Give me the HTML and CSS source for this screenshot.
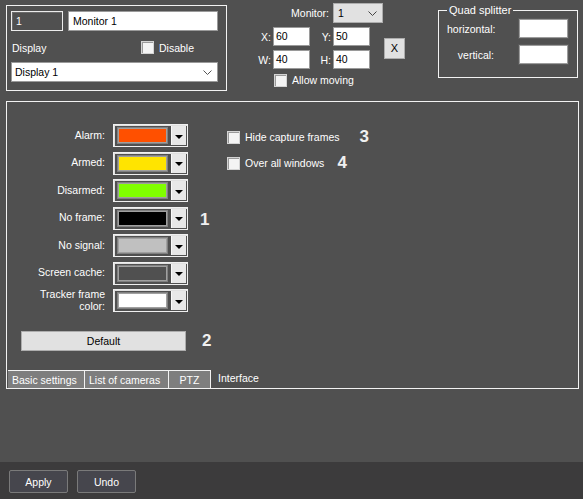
FILE: index.html
```html
<!DOCTYPE html>
<html>
<head>
<meta charset="utf-8">
<link rel="stylesheet" href="styles.css">
</head>
<body>
<div class="app">
  <div class="top">
    <div class="mon-box">
      <div class="mon-row1">
        <div class="in-id">1</div>
        <div class="in-name">Monitor 1</div>
      </div>
      <div class="mon-row2">
        <span class="lbl">Display</span>
        <label class="chk"><span class="cb"></span><span>Disable</span></label>
      </div>
      <div class="sel-display">
        <span>Display 1</span>
        <svg class="chev" width="9" height="5" viewBox="0 0 9 5"><path d="M0.5 0.5 L4.5 4.5 L8.5 0.5" fill="none" stroke="#555" stroke-width="1"/></svg>
      </div>
    </div>

    <div class="geo">
      <div class="geo-mon-lbl">Monitor:</div>
      <div class="sel-mon">
        <span>1</span>
        <svg class="chev" width="9" height="5" viewBox="0 0 9 5"><path d="M0.5 0.5 L4.5 4.5 L8.5 0.5" fill="none" stroke="#444" stroke-width="1"/></svg>
      </div>
      <div class="geo-lbl g1 r2">X:</div>
      <div class="num g2 r2">60</div>
      <div class="geo-lbl g3 r2">Y:</div>
      <div class="num g4 r2">50</div>
      <div class="geo-x">X</div>
      <div class="geo-lbl g1 r3">W:</div>
      <div class="num g2 r3">40</div>
      <div class="geo-lbl g3 r3">H:</div>
      <div class="num g4 r3">40</div>
      <label class="chk geo-allow"><span class="cb"></span><span>Allow moving</span></label>
    </div>

    <fieldset class="quad">
      <legend>Quad splitter</legend>
      <div class="quad-grid">
        <span class="quad-lbl">horizontal:</span>
        <div class="quad-in"></div>
        <span class="quad-lbl">vertical:</span>
        <div class="quad-in"></div>
      </div>
    </fieldset>
  </div>

  <div class="main">
    <div class="main-body">
      <div class="colors">
        <div class="crow">
          <span class="clbl">Alarm:</span>
          <div class="combo"><span class="swatch c-alarm"></span><span class="ddb"><span class="tri"></span></span></div>
          <span></span>
        </div>
        <div class="crow">
          <span class="clbl">Armed:</span>
          <div class="combo"><span class="swatch c-armed"></span><span class="ddb"><span class="tri"></span></span></div>
          <span></span>
        </div>
        <div class="crow">
          <span class="clbl">Disarmed:</span>
          <div class="combo"><span class="swatch c-disarmed"></span><span class="ddb"><span class="tri"></span></span></div>
          <span></span>
        </div>
        <div class="crow">
          <span class="clbl">No frame:</span>
          <div class="combo"><span class="swatch c-noframe"></span><span class="ddb"><span class="tri"></span></span></div>
          <span class="note note-1">1</span>
        </div>
        <div class="crow">
          <span class="clbl">No signal:</span>
          <div class="combo"><span class="swatch c-nosignal"></span><span class="ddb"><span class="tri"></span></span></div>
          <span></span>
        </div>
        <div class="crow">
          <span class="clbl">Screen cache:</span>
          <div class="combo"><span class="swatch c-cache"></span><span class="ddb"><span class="tri"></span></span></div>
          <span></span>
        </div>
        <div class="crow">
          <span class="clbl two">Tracker frame<br>color:</span>
          <div class="combo"><span class="swatch c-tracker"></span><span class="ddb"><span class="tri"></span></span></div>
          <span></span>
        </div>
        <div class="def-row">
          <div class="btn-default">Default</div>
          <span class="note note-2">2</span>
        </div>
      </div>
      <div class="opts">
        <div class="opt-row">
          <label class="chk"><span class="cb"></span><span>Hide capture frames</span></label>
          <span class="note note-3">3</span>
        </div>
        <div class="opt-row">
          <label class="chk"><span class="cb"></span><span>Over all windows</span></label>
          <span class="note note-4">4</span>
        </div>
      </div>
    </div>
    <div class="tabs">
      <div class="tab">Basic settings</div>
      <div class="tab">List of cameras</div>
      <div class="tab tab-ptz">PTZ</div>
      <div class="tab-active">Interface</div>
    </div>
  </div>

  <div class="footer">
    <div class="fbtn">Apply</div>
    <div class="fbtn">Undo</div>
  </div>
</div>
</body>
</html>
```

FILE: styles.css
```css
* { box-sizing: border-box; }
html, body { margin: 0; padding: 0; }
body {
  background: #505050;
  font-family: "Liberation Sans", Arial, sans-serif;
  font-size: 10.5px;
  color: #ffffff;
  width: 583px;
  height: 499px;
  overflow: hidden;
}
.app {
  display: flex;
  flex-direction: column;
  height: 499px;
}

/* ---------- top ---------- */
.top {
  display: flex;
  align-items: flex-start;
  height: 101px;
}
.mon-box {
  margin: 5px 0 0 6px;
  width: 221px;
  height: 86px;
  border: 1px solid #f2f2f2;
  padding: 5px 8px 0 4px;
  display: flex;
  flex-direction: column;
}
.mon-row1 {
  display: flex;
  gap: 5px;
  height: 20px;
}
.in-id {
  width: 52px;
  border: 1px solid #ececec;
  box-shadow: inset 1px 1px 0 #6b6b6b;
  padding: 2px 4px;
  line-height: 14px;
  color: #fff;
}
.in-name {
  flex: 1;
  background: #fff;
  border: 1px solid #9a9a9a;
  color: #000;
  padding: 2px 4px;
  line-height: 14px;
}
.mon-row2 {
  display: flex;
  align-items: center;
  height: 23px;
  margin-top: 5px;
  padding-left: 1px;
}
.mon-row2 .lbl { width: 129px; }
.chk {
  display: flex;
  align-items: center;
  gap: 5px;
}
.cb {
  width: 13px;
  height: 13px;
  background: #f4f4f4;
  border: 1px solid #d4d4d4;
  box-shadow: inset 1px 1px 0 #9a9a9a;
  flex: none;
}
.sel-display {
  margin-top: 3px;
  height: 20px;
  background: #fff;
  border: 1px solid #9a9a9a;
  color: #000;
  display: flex;
  align-items: center;
  justify-content: space-between;
  padding: 0 5px 0 3px;
}

.geo {
  margin-left: 29px;
  margin-top: 3px;
  display: grid;
  grid-template-columns: 17px 37px 23px 37px 14px 21px;
  grid-template-rows: 20px 19px 19px 14px;
  row-gap: 4px;
  align-items: center;
}
.geo-mon-lbl {
  grid-column: 1 / 4;
  grid-row: 1;
  text-align: right;
  padding-right: 4px;
}
.sel-mon {
  grid-column: 4 / 7;
  grid-row: 1;
  width: 50px;
  height: 20px;
  background: #e1e1e1;
  border: 1px solid #adadad;
  color: #000;
  display: flex;
  align-items: center;
  justify-content: space-between;
  padding: 0 5px 0 4px;
}
.g1 { grid-column: 1; }
.g2 { grid-column: 2; }
.g3 { grid-column: 3; }
.g4 { grid-column: 4; }
.r2 { grid-row: 2; }
.r3 { grid-row: 3; }
.geo-lbl {
  text-align: right;
  padding-right: 2px;
}
.num {
  height: 19px;
  background: #fff;
  border: 1px solid #9a9a9a;
  color: #000;
  padding: 1px 2px;
  line-height: 15px;
}
.geo-x {
  grid-column: 6;
  grid-row: 2 / 4;
  width: 21px;
  height: 21px;
  background: #e1e1e1;
  border: 1px solid #adadad;
  color: #000;
  display: flex;
  align-items: center;
  justify-content: center;
  font-size: 11px;
}
.geo-allow {
  grid-column: 2 / 7;
  grid-row: 4;
  padding-left: 1px;
}

.quad {
  margin: 4px 0 0 33px;
  width: 140px;
  height: 74px;
  border: 1px solid #f2f2f2;
  padding: 0 8px 0 8px;
}
.quad legend {
  padding: 0 2px;
  margin-left: 0;
  line-height: 12px;
  font-size: 11px;
}
.quad-grid {
  display: grid;
  grid-template-columns: 47px 49px;
  column-gap: 25px;
  row-gap: 7px;
  align-items: center;
  margin-top: 3px;
}
.quad-lbl { text-align: right; }
.quad-in {
  height: 19px;
  background: #fff;
  border: 1px solid #9c9c9c;
  box-shadow: 0 0 0 1px #5a5a5a;
}

/* ---------- main panel ---------- */
.main {
  margin-left: 6px;
  width: 573px;
  height: 288px;
  border: 1px solid #f2f2f2;
  display: flex;
  flex-direction: column;
}
.main-body {
  display: flex;
  padding-top: 22px;
}
.colors {
  width: 213px;
  display: flex;
  flex-direction: column;
  gap: 4.5px;
}
.crow {
  display: grid;
  grid-template-columns: 98px 75px 1fr;
  column-gap: 8px;
  align-items: center;
  height: 23px;
}
.clbl {
  text-align: right;
  line-height: 12px;
  margin-top: -2px;
}
.clbl.two { margin-top: -1px; }
.combo {
  width: 75px;
  height: 23px;
  border: 1px solid #f0f0f0;
  box-shadow: inset 1px 1px 0 #e0e0e0;
  display: flex;
  align-items: center;
  padding: 2px 1px 2px 3px;
  gap: 3px;
}
.swatch {
  width: 51px;
  height: 17px;
  border: 1px solid #808080;
  box-shadow: inset 0 0 0 1px #a0a0a0;
}
.c-alarm { background: #ff5000; }
.c-armed { background: #ffe400; }
.c-disarmed { background: #80ff00; }
.c-noframe { background: #000000; }
.c-nosignal { background: #c0c0c0; }
.c-cache { background: #505050; }
.c-tracker { background: #ffffff; }
.ddb {
  width: 15px;
  height: 19px;
  background: #e8e8e8;
  border-left: 1px solid #fafafa;
  display: flex;
  align-items: center;
  justify-content: center;
}
.tri {
  width: 0;
  height: 0;
  border-left: 4px solid transparent;
  border-right: 4px solid transparent;
  border-top: 4px solid #000;
  margin-top: 2px;
}
.note {
  font-weight: bold;
  font-size: 17px;
  color: #f0f0f0;
  font-family: "Liberation Sans", Arial, sans-serif;
}
.note-1 { padding-left: 4px; margin-top: 3px; }
.def-row {
  display: flex;
  align-items: center;
  margin-top: 14px;
  padding-left: 14px;
}
.btn-default {
  width: 165px;
  height: 20px;
  background: #e1e1e1;
  border: 1px solid #adadad;
  color: #000;
  display: flex;
  align-items: center;
  justify-content: center;
}
.note-2 { margin-left: 16px; }

.opts {
  margin-left: 7px;
  padding-top: 6px;
  display: flex;
  flex-direction: column;
  gap: 12px;
}
.opt-row {
  display: flex;
  align-items: center;
  height: 14px;
}
.note-3 { margin-left: 20px; }
.note-4 { margin-left: 13px; }

.tabs {
  margin-top: auto;
  display: flex;
  height: 18px;
  padding-left: 1px;
}
.tab {
  background: #7e7e7e;
  border-top: 1px solid #f2f2f2;
  border-right: 1px solid #f2f2f2;
  padding: 0 4px;
  display: flex;
  align-items: center;
  color: #fff;
}
.tab:first-child { width: 77px; }
.tab:nth-child(2) { width: 84px; }
.tab-ptz { width: 42px; justify-content: center; }
.tab-active {
  padding-left: 7px;
  display: flex;
  align-items: center;
  margin-top: -3px;
}

/* ---------- footer ---------- */
.footer {
  margin-top: auto;
  height: 37px;
  background: #3c3b3c;
  display: flex;
  align-items: center;
  gap: 9px;
  padding: 2px 0 0 9px;
}
.fbtn {
  width: 59px;
  height: 23px;
  background: #46464d;
  border: 1px solid #7a7a7a;
  border-radius: 2px;
  color: #fff;
  display: flex;
  align-items: center;
  justify-content: center;
}
```
